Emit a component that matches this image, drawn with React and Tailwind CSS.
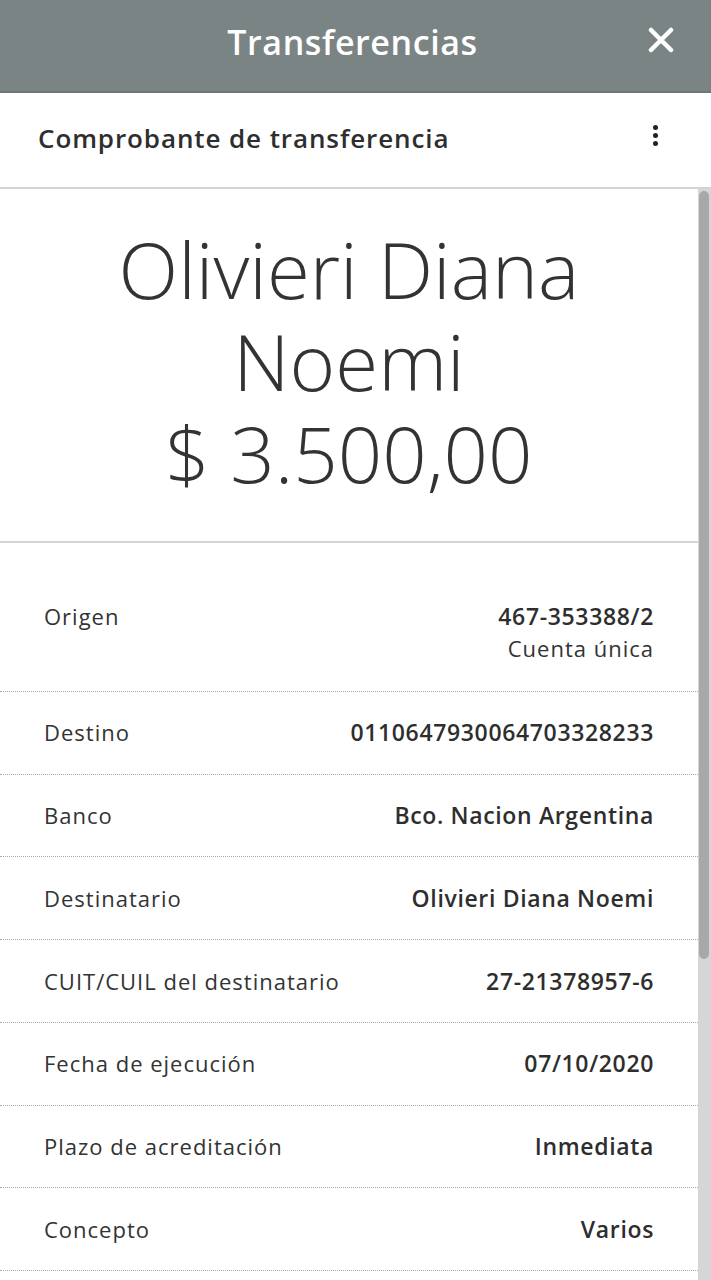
const rows = [
  { label: "Origen", value: "467-353388/2", sub: "Cuenta única" },
  { label: "Destino", value: "0110647930064703328233" },
  { label: "Banco", value: "Bco. Nacion Argentina" },
  { label: "Destinatario", value: "Olivieri Diana Noemi" },
  { label: "CUIT/CUIL del destinatario", value: "27-21378957-6" },
  { label: "Fecha de ejecución", value: "07/10/2020" },
  { label: "Plazo de acreditación", value: "Inmediata" },
  { label: "Concepto", value: "Varios" },
  { label: "Referencia", value: "Varios" },
];

export default function App() {
  return (
    <div
      className="h-[1280px] w-[711px] overflow-hidden bg-white flex flex-col"
      style={{ fontFamily: "'Open Sans', 'Noto Sans', sans-serif" }}
    >
      {/* top bar */}
      <div className="h-[93px] shrink-0 bg-[#7b8485] border-b-2 border-[#6d7576] relative flex items-center justify-center">
        <h1 className="text-[34px] font-semibold text-white tracking-[0.6px] -mt-[6px] -ml-[6px]">Transferencias</h1>
        <button className="absolute right-[37px] top-[27px] w-[26px] h-[26px]">
          <svg viewBox="0 0 26 26" className="w-[26px] h-[26px]">
            <path d="M3 3 L23 23 M23 3 L3 23" stroke="white" strokeWidth="4.5" strokeLinecap="round" />
          </svg>
        </button>
      </div>

      {/* sub header */}
      <div className="h-[96px] shrink-0 flex items-center justify-between pl-[38px] pr-[53px] border-b-2 border-[#d3d3d3]">
        <span className="text-[26px] font-semibold text-[#2e2e2e] tracking-[0.9px] -mt-[4px]">Comprobante de transferencia</span>
        <div className="flex flex-col gap-[3px] -mt-[10px]">
          <span className="w-[5px] h-[5px] rounded-full bg-[#222]" />
          <span className="w-[5px] h-[5px] rounded-full bg-[#222]" />
          <span className="w-[5px] h-[5px] rounded-full bg-[#222]" />
        </div>
      </div>

      <div className="flex flex-1 min-h-0">
        <div className="flex-1 min-w-0">
          {/* hero */}
          <div className="h-[354px] border-b-2 border-[#d3d3d3] flex flex-col items-center justify-center text-center text-[#333] font-light text-[78px] leading-[92px] pb-[8px]">
            <div>Olivieri Diana</div>
            <div>Noemi</div>
            <div>$ 3.500,00</div>
          </div>

          {/* details */}
          <div className="pt-[33px]">
            {rows.map((r) => (
              <div
                key={r.label}
                className="flex justify-between items-start px-[44px] py-[25.4px] border-b border-dotted border-[#a9a9a9] text-[22px] leading-[31px] text-[#333] tracking-[1px]"
              >
                <span>{r.label}</span>
                <div className="text-right">
                  <div className="font-semibold text-[23px] tracking-[0.65px] text-[#2e2e2e]">{r.value}</div>
                  {r.sub && <div className="leading-[33px]">{r.sub}</div>}
                </div>
              </div>
            ))}
          </div>
        </div>

        {/* scrollbar */}
        <div className="w-[13px] shrink-0 bg-[#d6d6d6] pt-[2px]">
          <div className="w-[10px] ml-[1px] h-[768px] rounded-full bg-[#a8a8a8]" />
        </div>
      </div>
    </div>
  );
}
